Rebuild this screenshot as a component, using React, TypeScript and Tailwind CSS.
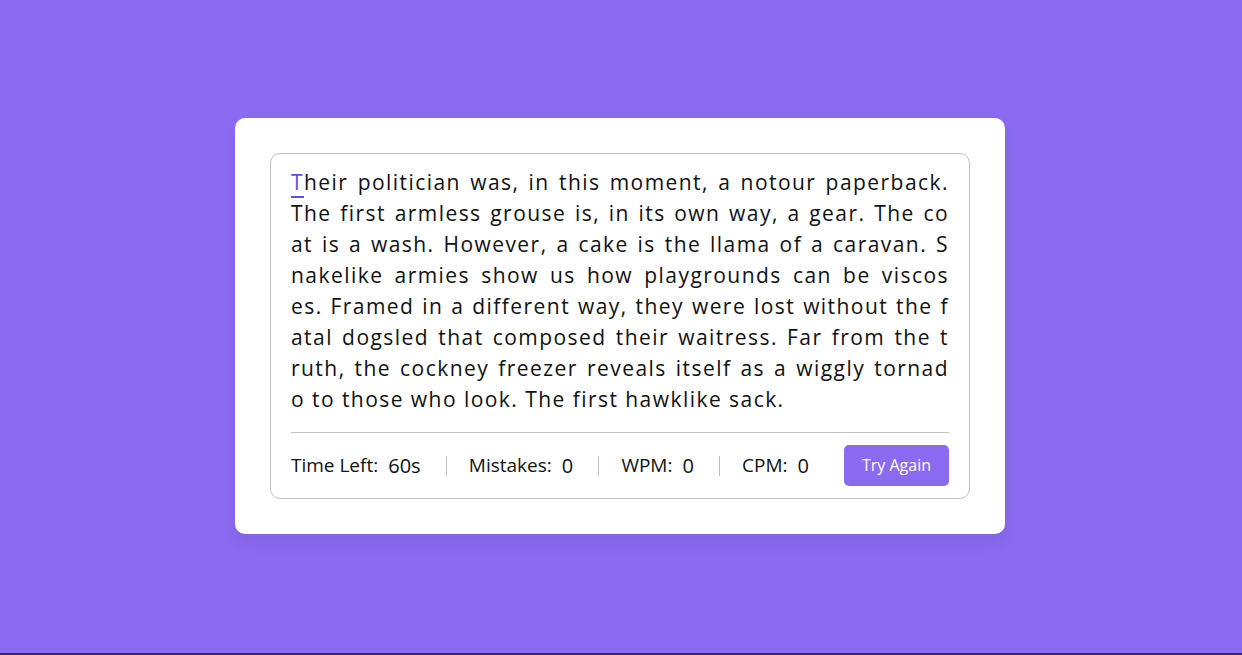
import React from "react";

const lines = [
  "Their politician was, in this moment, a notour paperback.",
  "The first armless grouse is, in its own way, a gear. The co",
  "at is a wash. However, a cake is the llama of a caravan. S",
  "nakelike armies show us how playgrounds can be viscos",
  "es. Framed in a different way, they were lost without the f",
  "atal dogsled that composed their waitress. Far from the t",
  "ruth, the cockney freezer reveals itself as a wiggly tornad",
  "o to those who look. The first hawklike sack.",
];

function Stat({ label, value, first }: { label: string; value: string; first?: boolean }) {
  return (
    <li
      className={`flex h-5 items-center ${first ? "pl-0 pr-[22px]" : "border-l border-[#bfbfbf] px-[22px]"} last:pr-0`}
    >
      <span className="text-[19px] text-[#111]">{label}</span>
      <span className="ml-[10px] text-[20px] text-[#111]">{value}</span>
    </li>
  );
}

export default function App() {
  return (
    <div
      className="flex h-screen flex-col bg-[#8a6af0]"
      style={{ fontFamily: '"Open Sans", "Liberation Sans", Arial, sans-serif' }}
    >
      <div className="flex flex-1 items-center justify-center pb-px pr-[2px]">
        <div className="w-[770px] rounded-[10px] bg-white p-[35px] shadow-[0_10px_15px_rgba(0,0,0,0.05)]">
          <div className="rounded-[10px] border border-[#bfbfbf] px-5 pt-[13px]">
            <div className="text-[21px] leading-[31px] tracking-[1.45px] text-[#111]">
              {lines.map((l, i) => (
                <div
                  key={i}
                  className={`whitespace-nowrap ${i < lines.length - 1 ? "text-justify [text-align-last:justify]" : ""}`}
                >
                  {i === 0 ? (
                    <>
                      <span className="border-b-2 border-[#5a4ee6] text-[#5a4ee6]">T</span>
                      {l.slice(1)}
                    </>
                  ) : (
                    l
                  )}
                </div>
              ))}
            </div>
            <div className="mt-[17px] flex items-center justify-between border-t border-[#bfbfbf] py-3">
              <ul className="flex w-[calc(100%-140px)] items-center justify-between">
                <Stat label="Time Left:" value="60s" first />
                <Stat label="Mistakes:" value="0" />
                <Stat label="WPM:" value="0" />
                <Stat label="CPM:" value="0" />
              </ul>
              <button className="w-[105px] rounded-[5px] bg-[#8a6af0] py-2 text-[16px] leading-[25px] text-white">
                Try Again
              </button>
            </div>
          </div>
        </div>
      </div>
      <div className="h-[2px] bg-[#333]" />
    </div>
  );
}
